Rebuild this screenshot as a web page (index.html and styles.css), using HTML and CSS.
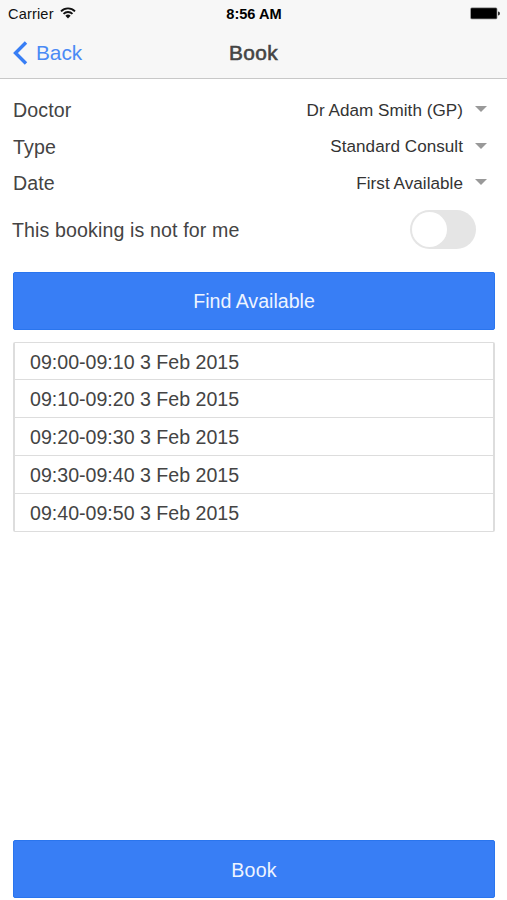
FILE: index.html
```
<!DOCTYPE html>
<html lang="en">
<head>
    <meta charset="UTF-8">
    <meta name="viewport" content="width=device-width, initial-scale=1.0">
    <title>Book</title>
    <link rel="stylesheet" href="styles.css">
</head>
<body>
    <header class="header">
        <div class="status-bar">
            <div class="carrier">
                <span>Carrier</span>
                <svg class="wifi" viewBox="0 0 16 12" width="16" height="12">
                    <path d="M1 4.3a9.9 9.9 0 0 1 14 0M3.5 6.9a6.4 6.4 0 0 1 9 0" fill="none" stroke="#111" stroke-width="1.9"/>
                    <path d="M8 11.4L5.4 8.8a3.7 3.7 0 0 1 5.2 0z" fill="#111"/>
                </svg>
            </div>
            <span class="clock">8:56 AM</span>
            <svg class="battery" viewBox="0 0 30 13" width="30" height="13">
                <rect x="0.3" y="0.5" width="27" height="11.7" rx="1.5" fill="#777"/>
                <rect x="1" y="1.2" width="25.6" height="10.3" rx="0.8" fill="#000"/>
                <path d="M28 4.5a2 2 0 0 1 0 4z" fill="#333"/>
            </svg>
        </div>
        <div class="nav-bar">
            <a class="back" href="#">
                <svg viewBox="0 0 15 24" width="15" height="24">
                    <path d="M13 1.5L2.5 12L13 22.5" fill="none" stroke="#387ef5" stroke-width="3.4"/>
                </svg>
                <span>Back</span>
            </a>
            <h1 class="title">Book</h1>
        </div>
    </header>

    <main class="content">
        <div class="field">
            <span class="label">Doctor</span>
            <span class="value">Dr Adam Smith (GP)</span>
            <span class="arrow"></span>
        </div>
        <div class="field">
            <span class="label">Type</span>
            <span class="value">Standard Consult</span>
            <span class="arrow"></span>
        </div>
        <div class="field">
            <span class="label">Date</span>
            <span class="value">First Available</span>
            <span class="arrow"></span>
        </div>
        <div class="toggle-row">
            <span class="label">This booking is not for me</span>
            <span class="toggle"><span class="handle"></span></span>
        </div>

        <button type="button" class="button">Find Available</button>

        <ul class="slots">
            <li>09:00-09:10 3 Feb 2015</li>
            <li>09:10-09:20 3 Feb 2015</li>
            <li>09:20-09:30 3 Feb 2015</li>
            <li>09:30-09:40 3 Feb 2015</li>
            <li>09:40-09:50 3 Feb 2015</li>
        </ul>

        <button type="button" class="button book">Book</button>
    </main>
</body>
</html>
```
FILE: styles.css
```
* {
    box-sizing: border-box;
}
body {
    display: flex;
    flex-direction: column;
    height: 100vh;
    margin: 0;
    overflow: hidden;
    background-color: #fff;
    color: #444;
    font-family: "Liberation Sans", Arial, sans-serif;
    font-size: 19.6px;
}

/* header */
.header {
    height: 79px;
    background-color: #f7f7f7;
    border-bottom: 1px solid #c8c8c8;
}
.status-bar {
    display: grid;
    grid-template-columns: 1fr auto 1fr;
    align-items: center;
    height: 27px;
    padding: 0 7px 0 8px;
    color: #111;
    font-size: 14.6px;
}
.carrier {
    display: flex;
    align-items: center;
    gap: 6px;
    letter-spacing: 0.15px;
}
.wifi {
    margin-bottom: 2px;
}
.clock {
    font-weight: bold;
    font-size: 14.6px;
    color: #000;
}
.battery {
    justify-self: end;
}
.nav-bar {
    display: grid;
    grid-template-columns: 1fr auto 1fr;
    align-items: center;
    height: 51px;
    padding: 0 13px;
}
.back {
    display: flex;
    align-items: center;
    gap: 8px;
    color: #4a8af5;
    font-size: 20.8px;
    text-decoration: none;
}
.title {
    margin: 0;
    padding-top: 1px;
    font-size: 20.8px;
    font-weight: normal;
    letter-spacing: 0.4px;
    -webkit-text-stroke: 0.6px #444;
}

/* form */
.content {
    display: flex;
    flex: 1;
    flex-direction: column;
    padding: 13px 12px 2px 13px;
}
.field {
    display: flex;
    align-items: center;
    height: 36.6px;
    padding-top: 1px;
}
.label {
    letter-spacing: 0.12px;
}
.value {
    margin-left: auto;
    font-size: 17.1px;
    letter-spacing: 0.04px;
    color: #333;
}
.arrow {
    margin: 0 8px 3px 12px;
    border-top: 6px solid #999;
    border-left: 6px solid transparent;
    border-right: 6px solid transparent;
}
.toggle-row {
    display: flex;
    align-items: center;
    justify-content: space-between;
    height: 57px;
    margin: 0 19px 13px -1px;
    padding-bottom: 1px;
}
.toggle-row .label {
    padding-top: 2px;
}
.toggle {
    width: 66px;
    height: 39px;
    padding: 2px;
    border-radius: 20px;
    background-color: #e5e5e5;
}
.handle {
    display: block;
    width: 35px;
    height: 35px;
    border-radius: 50%;
    background-color: #fff;
}
.button {
    flex: none;
    height: 58px;
    padding: 2px 0 0;
    border: 1px solid #2a75ee;
    border-radius: 2px;
    background-color: #387ef5;
    color: #eef4ff;
    font-family: inherit;
    font-size: 19.6px;
}
.book {
    margin-top: auto;
    letter-spacing: 0.2px;
}

/* available times */
.slots {
    margin: 12px 0 0;
    padding: 0;
    border: 1px solid #ddd;
    border-width: 1px 2px;
    border-radius: 2px;
    list-style: none;
}
.slots li {
    display: flex;
    align-items: center;
    height: 37.7px;
    padding: 2px 15px 0;
    border-bottom: 1px solid #ddd;
}
.slots li:last-child {
    border-bottom: none;
}
```
